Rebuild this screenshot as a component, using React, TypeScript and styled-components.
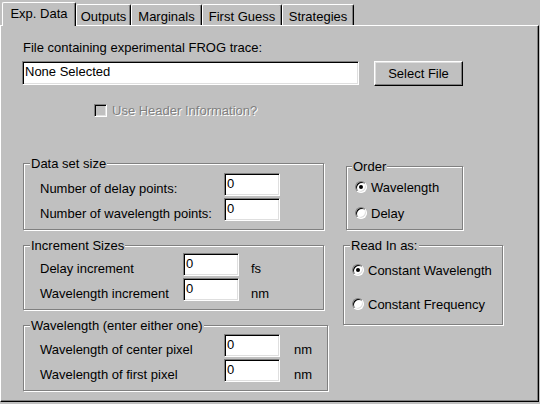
import React from 'react';
import styled, { createGlobalStyle } from 'styled-components';

const GlobalStyle = createGlobalStyle`
  html, body {
    margin: 0;
    padding: 0;
    background: #c0c0c0;
  }
  body {
    font-family: "Liberation Sans", Arial, sans-serif;
    font-size: 13px;
    line-height: 15px;
    color: #000;
  }
`;

const TABS = [
  { label: 'Exp. Data', width: 74, active: true },
  { label: 'Outputs', width: 55 },
  { label: 'Marginals', width: 71 },
  { label: 'First Guess', width: 80 },
  { label: 'Strategies', width: 72 },
];

const App = () => {
  return (
    <Window>
      <GlobalStyle />
      <TabRow>
        {TABS.map((tab) => (
          <Tab key={tab.label} $w={tab.width} $active={tab.active}>
            {tab.label}
          </Tab>
        ))}
      </TabRow>
      <Panel>
        <Caption>File containing experimental FROG trace:</Caption>
        <FileRow>
          <TextBox $w={337} $h={24}>None Selected</TextBox>
          <Button>Select File</Button>
        </FileRow>
        <CheckRow>
          <CheckBox />
          <DisabledLabel>Use Header Information?</DisabledLabel>
        </CheckRow>

        <Groups>
          <Column>
            <Group $w={301}>
              <Legend>Data set size</Legend>
              <Rows $top={2}>
                <FieldRow $labelW={184}>
                  <FieldLabel>Number of delay points:</FieldLabel>
                  <TextBox $w={56} $h={23}>0</TextBox>
                </FieldRow>
                <FieldRow $labelW={184}>
                  <FieldLabel>Number of wavelength points:</FieldLabel>
                  <TextBox $w={56} $h={23}>0</TextBox>
                </FieldRow>
              </Rows>
            </Group>

            <Group $w={301}>
              <Legend>Increment Sizes</Legend>
              <Rows $top={0}>
                <FieldRow $labelW={143}>
                  <FieldLabel>Delay increment</FieldLabel>
                  <TextBox $w={56} $h={23}>0</TextBox>
                  <Unit $gap={12}>fs</Unit>
                </FieldRow>
                <FieldRow $labelW={143}>
                  <FieldLabel>Wavelength increment</FieldLabel>
                  <TextBox $w={56} $h={23}>0</TextBox>
                  <Unit $gap={12}>nm</Unit>
                </FieldRow>
              </Rows>
            </Group>

            <Group $w={305}>
              <Legend>Wavelength (enter either one)</Legend>
              <Rows $top={1}>
                <FieldRow $labelW={184}>
                  <FieldLabel>Wavelength of center pixel</FieldLabel>
                  <TextBox $w={56} $h={23}>0</TextBox>
                  <Unit $gap={14}>nm</Unit>
                </FieldRow>
                <FieldRow $labelW={184}>
                  <FieldLabel>Wavelength of first pixel</FieldLabel>
                  <TextBox $w={56} $h={23}>0</TextBox>
                  <Unit $gap={14}>nm</Unit>
                </FieldRow>
              </Rows>
            </Group>
          </Column>

          <Column>
            <OrderGroup $w={117} $pad={3}>
              <Legend $ml={5}>Order</Legend>
              <RadioRow $h={26}>
                <Radio $checked />
                <span>Wavelength</span>
              </RadioRow>
              <RadioRow $h={26}>
                <Radio />
                <span>Delay</span>
              </RadioRow>
            </OrderGroup>

            <Group $w={160} $pad={3}>
              <Legend>Read In as:</Legend>
              <RadioRow $h={34}>
                <Radio $checked />
                <span>Constant Wavelength</span>
              </RadioRow>
              <RadioRow $h={34}>
                <Radio />
                <span>Constant Frequency</span>
              </RadioRow>
            </Group>
          </Column>
        </Groups>
      </Panel>
    </Window>
  );
};

export default App;

const Window = styled.div`
  width: 540px;
  height: 404px;
  background: #c0c0c0;
  overflow: hidden;
`;

const TabRow = styled.div`
  display: flex;
  align-items: flex-end;
  height: 25px;
  padding-left: 2px;
`;

const Tab = styled.div<{ $w: number; $active?: boolean }>`
  box-sizing: border-box;
  position: relative;
  z-index: ${({ $active }) => ($active ? 1 : 0)};
  width: ${({ $w }) => $w}px;
  height: ${({ $active }) => ($active ? 24 : 21)}px;
  margin-bottom: ${({ $active }) => ($active ? -1 : 0)}px;
  padding: ${({ $active }) => ($active ? '0 0 2px' : '2px 0 0')};
  display: flex;
  align-items: center;
  justify-content: center;
  background: #c0c0c0;
  border-top: 1px solid #fff;
  border-left: 1px solid #fff;
  border-right: 1px solid #000;
  border-radius: 2px 2px 0 0;
  box-shadow: inset -1px 0 #808080;
  white-space: nowrap;
`;

const Panel = styled.div`
  box-sizing: border-box;
  width: 539px;
  height: 377px;
  border-top: 1px solid #fff;
  border-left: 1px solid #fff;
  border-right: 1px solid #000;
  border-bottom: 1px solid #000;
  box-shadow: inset -1px -1px #808080;
  padding: 14px 0 0 21px;
`;

const Caption = styled.div`
  margin-left: 1px;
`;

const FileRow = styled.div`
  display: flex;
  align-items: flex-start;
  gap: 15px;
  margin-top: 6px;
`;

const TextBox = styled.div<{ $w: number; $h: number }>`
  box-sizing: border-box;
  width: ${({ $w }) => $w}px;
  height: ${({ $h }) => $h}px;
  padding: 2px 0 0 2px;
  background: #fff;
  border: 1px solid;
  border-color: #808080 #fff #fff #808080;
  box-shadow: inset 1px 1px #000, inset -1px -1px #dfdfdf;
  white-space: nowrap;
`;

const Button = styled.div`
  box-sizing: border-box;
  width: 89px;
  height: 25px;
  display: flex;
  align-items: center;
  justify-content: center;
  background: #c0c0c0;
  border: 1px solid;
  border-color: #fff #000 #000 #fff;
  box-shadow: inset -1px -1px #808080, inset 1px 1px #dfdfdf;
`;

const CheckRow = styled.div`
  display: flex;
  align-items: center;
  gap: 5px;
  margin: 17px 0 0 72px;
`;

const CheckBox = styled.span`
  box-sizing: border-box;
  width: 13px;
  height: 13px;
  flex-shrink: 0;
  background: #c0c0c0;
  border: 1px solid;
  border-color: #808080 #fff #fff #808080;
  box-shadow: inset 1px 1px #000, inset -1px -1px #dfdfdf;
`;

const DisabledLabel = styled.span`
  color: #808080;
  text-shadow: 1px 1px 0 #fff;
`;

const Groups = styled.div`
  display: flex;
  align-items: flex-start;
  gap: 15px;
  margin: 45px 0 0 1px;
`;

const Column = styled.div`
  display: flex;
  flex-direction: column;
  gap: 15px;
`;

const Group = styled.div<{ $w: number; $pad?: number }>`
  box-sizing: border-box;
  width: ${({ $w }) => $w}px;
  border: 1px solid #808080;
  box-shadow: inset 1px 1px #fff, 1px 1px #fff;
  padding-bottom: ${({ $pad }) => $pad ?? 8}px;
`;

const OrderGroup = styled(Group)`
  margin: 3px 0 0 3px;
`;

const Legend = styled.div<{ $ml?: number }>`
  width: fit-content;
  height: 15px;
  margin: -8px 0 0 ${({ $ml }) => $ml ?? 6}px;
  padding: 0 1px;
  background: #c0c0c0;
  white-space: nowrap;
`;

const Rows = styled.div<{ $top: number }>`
  display: flex;
  flex-direction: column;
  gap: 2px;
  margin-top: ${({ $top }) => $top}px;
  padding-left: 16px;
`;

const FieldRow = styled.div<{ $labelW: number }>`
  display: grid;
  grid-template-columns: ${({ $labelW }) => $labelW}px auto auto;
  align-items: end;
  justify-content: start;
  height: 23px;
`;

const FieldLabel = styled.span`
  white-space: nowrap;
`;

const Unit = styled.span<{ $gap: number }>`
  margin-left: ${({ $gap }) => $gap}px;
`;

const RadioRow = styled.div<{ $h: number }>`
  display: flex;
  align-items: center;
  gap: 4px;
  height: ${({ $h }) => $h}px;
  padding-left: 8px;
  white-space: nowrap;
`;

const Radio = styled.span<{ $checked?: boolean }>`
  box-sizing: border-box;
  width: 12px;
  height: 12px;
  flex-shrink: 0;
  border-radius: 50%;
  background: #fff;
  border: 1px solid;
  border-color: #808080 #fff #fff #808080;
  box-shadow: inset 1px 1px #000, inset -1px -1px #dfdfdf;
  display: flex;
  align-items: center;
  justify-content: center;

  &::after {
    content: '';
    display: ${({ $checked }) => ($checked ? 'block' : 'none')};
    width: 4px;
    height: 4px;
    border-radius: 50%;
    background: #000;
  }
`;
